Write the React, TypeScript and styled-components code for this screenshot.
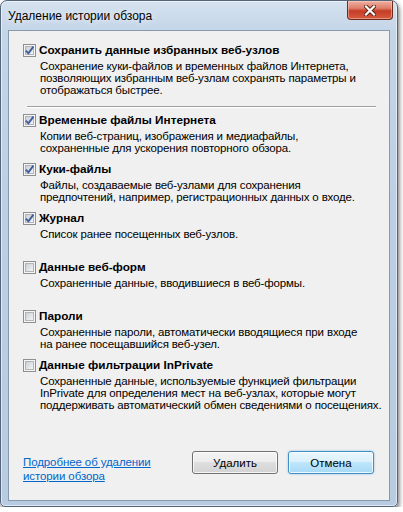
import React from 'react';
import styled, { createGlobalStyle } from 'styled-components';

type Option = {
  title: string;
  text: string[];
  checked: boolean;
};

const options: Option[] = [
  {
    title: 'Сохранить данные избранных веб-узлов',
    text: [
      'Сохранение куки-файлов и временных файлов Интернета,',
      'позволяющих избранным веб-узлам сохранять параметры и',
      'отображаться быстрее.',
    ],
    checked: true,
  },
  {
    title: 'Временные файлы Интернета',
    text: ['Копии веб-страниц, изображения и медиафайлы,', 'сохраненные для ускорения повторного обзора.'],
    checked: true,
  },
  {
    title: 'Куки-файлы',
    text: ['Файлы, создаваемые веб-узлами для сохранения', 'предпочтений, например, регистрационных данных о входе.'],
    checked: true,
  },
  {
    title: 'Журнал',
    text: ['Список ранее посещенных веб-узлов.'],
    checked: true,
  },
  {
    title: 'Данные веб-форм',
    text: ['Сохраненные данные, вводившиеся в веб-формы.'],
    checked: false,
  },
  {
    title: 'Пароли',
    text: ['Сохраненные пароли, автоматически вводящиеся при входе', 'на ранее посещавшийся веб-узел.'],
    checked: false,
  },
  {
    title: 'Данные фильтрации InPrivate',
    text: [
      'Сохраненные данные, используемые функцией фильтрации',
      'InPrivate для определения мест на веб-узлах, которые могут',
      'поддерживать автоматический обмен сведениями о посещениях.',
    ],
    checked: false,
  },
];

const GlobalStyle = createGlobalStyle`
  html, body {
    margin: 0;
    padding: 0;
    background: #ffffff;
  }
  body {
    font-family: "Liberation Sans", Arial, sans-serif;
    font-size: 11.5px;
  }
`;

const Window = styled.div`
  width: 398px;
  height: 507px;
  box-sizing: border-box;
  border: 1px solid #55657a;
  border-radius: 7px 7px 5px 5px;
  background: linear-gradient(180deg, #d5e2ef 0%, #c4d5e8 6%, #bccfe4 40%, #b7cbe1 100%);
  box-shadow: inset 0 0 0 1px rgba(255, 255, 255, 0.55), 1px 3px 5px rgba(0, 0, 0, 0.6);
  padding: 0 7px 5px 7px;
  display: flex;
  flex-direction: column;
`;

const TitleBar = styled.div`
  height: 29px;
  display: flex;
  align-items: flex-start;
`;

const TitleText = styled.div`
  padding-top: 7px;
  font-size: 12px;
  line-height: 16px;
  color: #000;
  text-shadow: 0 0 6px rgba(255, 255, 255, 0.9);
`;

const CloseButton = styled.div`
  margin-left: auto;
  margin-right: -3px;
  width: 44px;
  height: 18px;
  border: 1px solid #6e2a1c;
  border-top: none;
  border-radius: 0 0 4px 4px;
  background: linear-gradient(180deg, #eeb0a2 0%, #de7e6a 40%, #c53d26 55%, #d65a3e 100%);
  box-shadow: inset 0 0 0 1px rgba(255, 220, 210, 0.45);
  display: flex;
  align-items: center;
  justify-content: center;
`;

const Client = styled.div`
  flex: 1;
  background: #f0f0f0;
  border: 1px solid #8799ad;
  display: flex;
  flex-direction: column;
  padding: 12px 13px 0 14px;
  color: #000;
`;

const OptionBlock = styled.div<{ $slot: boolean }>`
  min-height: ${(p) => (p.$slot ? '49px' : '0')};
`;

const OptionHead = styled.label`
  display: flex;
  align-items: center;
  gap: 3px;
  height: 14px;
`;

const OptionTitle = styled.span`
  font-weight: 700;
  font-size: 11.75px;
  line-height: 14px;
`;

const OptionText = styled.div`
  margin: 3px 0 0 17px;
  font-size: 11.5px;
  line-height: 12px;
  letter-spacing: -0.15px;
  white-space: nowrap;
`;

const Line = styled.div``;

const Separator = styled.div`
  margin: 10px 0 5px 4px;
  height: 1px;
  background: #a0a0a0;
  border-bottom: 1px solid #ffffff;
`;

const BoxWrap = styled.span`
  display: inline-flex;
  width: 13px;
  height: 13px;
  flex: none;
`;

const Footer = styled.div`
  margin-top: auto;
  padding-bottom: 17px;
  display: flex;
  align-items: flex-start;
`;

const HelpLink = styled.a`
  margin-top: 4px;
  max-width: 140px;
  color: #0066cc;
  text-decoration: underline;
  font-size: 11.5px;
  line-height: 14px;
  letter-spacing: -0.1px;
  cursor: pointer;
`;

const Buttons = styled.div`
  margin-left: auto;
  margin-right: 2px;
  display: flex;
  gap: 10px;
`;

const Button = styled.button<{ $default?: boolean }>`
  width: 86px;
  height: 23px;
  padding: 0;
  font-family: "Liberation Sans", Arial, sans-serif;
  font-size: 11.5px;
  color: #000;
  border-radius: 3px;
  border: 1px solid ${(p) => (p.$default ? '#3c8fc9' : '#707070')};
  background: ${(p) =>
    p.$default
      ? 'linear-gradient(180deg, #eaf6fd 0%, #d9f0fc 49%, #bee6fd 50%, #a7d9f5 100%)'
      : 'linear-gradient(180deg, #f4f4f4 0%, #ececec 49%, #dfdfdf 50%, #d2d2d2 100%)'};
  box-shadow: ${(p) =>
    p.$default
      ? 'inset 0 0 0 1px rgba(255,255,255,0.8), 0 0 2px rgba(60,150,220,0.6)'
      : 'inset 0 0 0 1px rgba(255,255,255,0.8)'};
`;

function CheckBox({ checked }: { checked: boolean }) {
  return (
    <BoxWrap>
      <svg width="13" height="13" viewBox="0 0 13 13">
        <defs>
          <linearGradient id="cb-fill" x1="0" y1="0" x2="1" y2="1">
            <stop offset="0" stopColor="#c9ccd3" />
            <stop offset="1" stopColor="#f7f7f7" />
          </linearGradient>
        </defs>
        <rect x="0.5" y="0.5" width="12" height="12" fill="#f6f6f6" stroke="#8e8f8f" />
        <rect x="2.5" y="2.5" width="8" height="8" fill="url(#cb-fill)" stroke="#b0b4bb" />
        {checked && (
          <path d="M2.8 6.6 L5.4 9.3 L10.4 2.6" fill="none" stroke="#3f5d9c" strokeWidth="1.9" />
        )}
      </svg>
    </BoxWrap>
  );
}

function CloseGlyph() {
  return (
    <svg width="12" height="11" viewBox="0 0 12 11">
      <path d="M2 1.5 L10 9.5 M10 1.5 L2 9.5" stroke="#5a1c12" strokeWidth="4" strokeLinecap="square" />
      <path d="M2 1.5 L10 9.5 M10 1.5 L2 9.5" stroke="#ffffff" strokeWidth="2.2" strokeLinecap="square" />
    </svg>
  );
}

export default function App() {
  return (
    <>
      <GlobalStyle />
      <Window>
        <TitleBar>
          <TitleText>Удаление истории обзора</TitleText>
          <CloseButton>
            <CloseGlyph />
          </CloseButton>
        </TitleBar>
        <Client>
          {options.map((o, i) => (
            <React.Fragment key={o.title}>
              <OptionBlock $slot={i > 0}>
                <OptionHead>
                  <CheckBox checked={o.checked} />
                  <OptionTitle>{o.title}</OptionTitle>
                </OptionHead>
                <OptionText>
                  {o.text.map((line) => (
                    <Line key={line}>{line}</Line>
                  ))}
                </OptionText>
              </OptionBlock>
              {i === 0 && <Separator />}
            </React.Fragment>
          ))}
          <Footer>
            <HelpLink>Подробнее об удалении истории обзора</HelpLink>
            <Buttons>
              <Button type="button">Удалить</Button>
              <Button type="button" $default>
                Отмена
              </Button>
            </Buttons>
          </Footer>
        </Client>
      </Window>
    </>
  );
}
